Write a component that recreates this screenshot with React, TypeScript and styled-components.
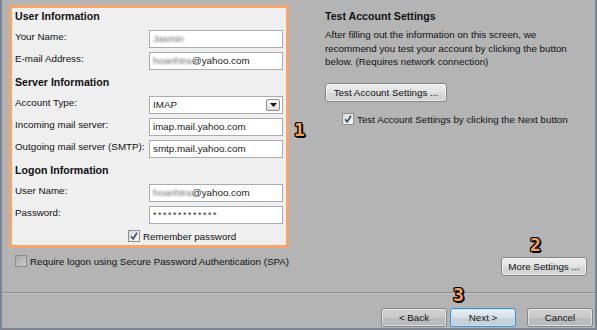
import React from "react";
import styled, { createGlobalStyle } from "styled-components";

const GlobalStyle = createGlobalStyle`
  html, body { margin: 0; padding: 0; background: #b4b4b4; }
  body { font-family: "Liberation Sans", Arial, sans-serif; }
  * { box-sizing: border-box; }
`;

const Window = styled.div`
  position: relative;
  width: 597px;
  height: 330px;
  background: #b4b4b4;
  border-left: 2px solid #7b8496;
  border-right: 2px solid #7b8496;
  border-bottom: 2px solid #7f8590;
  display: flex;
  flex-direction: column;
  font-size: 9.8px;
  color: #111;
`;

const Main = styled.div`
  display: flex;
  height: 292px;
  flex: none;
`;

const LeftCol = styled.div`
  display: flex;
  flex-direction: column;
  padding: 5px 0 0 7px;
  width: 287px;
  flex: none;
`;

const OrangeBox = styled.div`
  width: 280px;
  height: 243px;
  border: 3px solid #f6a56c;
  background: #efefef;
  padding: 0 3px;
  display: flex;
  flex-direction: column;
`;

const SectionTitle = styled.div<{ $mt?: number }>`
  height: 21px;
  line-height: 16px;
  margin-top: ${(p) => p.$mt ?? 0}px;
  font-weight: bold;
  font-size: 10.6px;
  color: #111;
`;

const FieldRow = styled.div`
  display: grid;
  grid-template-columns: 134px 134px;
  height: 22px;
`;

const Label = styled.div`
  line-height: 16px;
  white-space: nowrap;
`;

const TextBox = styled.div`
  margin-top: 1px;
  height: 18px;
  border: 1px solid #a9abb0;
  background: #fff;
  padding: 0 3px;
  line-height: 16px;
  color: #1a1a1a;
  white-space: nowrap;
  overflow: hidden;
  position: relative;
`;

const Blurred = styled.span`
  filter: blur(0.8px);
  color: #6a6a6a;
`;

const Stars = styled.span`
  letter-spacing: 1.5px;
  font-size: 9px;
  color: #333;
`;

const DropButton = styled.span`
  position: absolute;
  right: 2px;
  top: 2px;
  width: 14px;
  height: 12px;
  border: 1px solid #8a8a8a;
  border-radius: 2px;
  background: linear-gradient(#fdfdfd, #dedede);
  display: flex;
  align-items: center;
  justify-content: center;
`;

const CheckRow = styled.div<{ $ml?: number; $mt?: number }>`
  display: flex;
  align-items: center;
  gap: 3px;
  margin-left: ${(p) => p.$ml ?? 0}px;
  margin-top: ${(p) => p.$mt ?? 0}px;
  height: 18px;
  white-space: nowrap;
`;

const Box = styled.span<{ $dim?: boolean }>`
  width: 12px;
  height: 12px;
  flex: none;
  border: 1px solid ${(p) => (p.$dim ? "#8c8c8c" : "#8e8f8f")};
  background: ${(p) =>
    p.$dim
      ? "linear-gradient(135deg, #a9a9a9, #c9c9c9)"
      : "linear-gradient(135deg, #d9d9d9, #fbfbfb)"};
  display: flex;
  align-items: center;
  justify-content: center;
`;

const RightCol = styled.div`
  flex: 1;
  display: flex;
  flex-direction: column;
  align-items: flex-start;
  padding: 9px 8px 16px 36px;
`;

const Heading = styled.div`
  font-weight: bold;
  font-size: 10.6px;
  line-height: 14px;
  color: #111;
`;

const Paragraph = styled.p`
  margin: 5px 0 0 0;
  line-height: 13.5px;
  height: 41px;
  white-space: nowrap;
`;

const Button = styled.button<{ $w: number; $primary?: boolean; $dark?: boolean }>`
  width: ${(p) => p.$w}px;
  height: 19px;
  padding: 0;
  font-family: "Liberation Sans", Arial, sans-serif;
  font-size: 9.8px;
  color: #111;
  border: 1px solid ${(p) => (p.$primary ? "#3a93d6" : "#858585")};
  border-radius: 3px;
  box-shadow: inset 0 0 0 1px ${(p) => (p.$primary ? "#c6e4f6" : "rgba(255,255,255,0.55)")};
  background: ${(p) =>
    p.$primary
      ? "linear-gradient(#e6eef4, #d7e0e7 50%, #c9d3db 51%, #c4cfd8)"
      : p.$dark
      ? "linear-gradient(#d2d2d2, #c8c8c8 50%, #bdbdbd 51%, #b9b9b9)"
      : "linear-gradient(#ececec, #e2e2e2 50%, #d6d6d6 51%, #d2d2d2)"};
  flex: none;
`;

const TestButton = styled(Button)`
  margin-top: 14px;
`;

const Spacer = styled.div`
  flex: 1;
`;

const MoreButton = styled(Button)`
  align-self: flex-end;
`;

const Separator = styled.div`
  height: 2px;
  flex: none;
  border-top: 1px solid #8d8d8d;
  border-bottom: 1px solid #c6c6c6;
`;

const Footer = styled.div`
  flex: 1;
  display: flex;
  justify-content: flex-end;
  align-items: flex-start;
  padding: 14px 0 0 0;
`;

const FooterGap = styled.div<{ $w: number }>`
  width: ${(p) => p.$w}px;
  flex: none;
`;

const Annotation = styled.span<{ $x: number; $y: number }>`
  position: absolute;
  left: ${(p) => p.$x}px;
  top: ${(p) => p.$y}px;
  font-family: "DejaVu Sans Mono", "Liberation Mono", monospace;
  font-weight: bold;
  font-size: 18px;
  line-height: 18px;
  color: #f7a05a;
  text-shadow: 1px 0 0 #000, -1px 0 0 #000, 0 1px 0 #000, 0 -1px 0 #000,
    1px 1px 0 #000, -1px -1px 0 #000, 1px -1px 0 #000, -1px 1px 0 #000,
    2px 1px 0 #000, 1px 2px 0 #000;
`;

const Check = () => (
  <svg width="10" height="10" viewBox="0 0 10 10">
    <path d="M2 5.2 L4.2 7.8 L8 1.8" fill="none" stroke="#3a4b73" strokeWidth="1.6" />
  </svg>
);

const Arrow = () => (
  <svg width="7" height="4" viewBox="0 0 7 4">
    <path d="M0 0 H7 L3.5 4 Z" fill="#111" />
  </svg>
);

export default function App() {
  return (
    <Window>
      <GlobalStyle />
      <Main>
        <LeftCol>
          <OrangeBox>
            <SectionTitle>User Information</SectionTitle>
            <FieldRow>
              <Label>Your Name:</Label>
              <TextBox>
                <Blurred>Jasmin</Blurred>
              </TextBox>
            </FieldRow>
            <FieldRow>
              <Label>E-mail Address:</Label>
              <TextBox>
                <Blurred>hoanhtra</Blurred>@yahoo.com
              </TextBox>
            </FieldRow>
            <SectionTitle $mt={1}>Server Information</SectionTitle>
            <FieldRow>
              <Label>Account Type:</Label>
              <TextBox>
                IMAP
                <DropButton>
                  <Arrow />
                </DropButton>
              </TextBox>
            </FieldRow>
            <FieldRow>
              <Label>Incoming mail server:</Label>
              <TextBox>imap.mail.yahoo.com</TextBox>
            </FieldRow>
            <FieldRow>
              <Label>Outgoing mail server (SMTP):</Label>
              <TextBox>smtp.mail.yahoo.com</TextBox>
            </FieldRow>
            <SectionTitle $mt={1}>Logon Information</SectionTitle>
            <FieldRow>
              <Label>User Name:</Label>
              <TextBox>
                <Blurred>hoanhtra</Blurred>@yahoo.com
              </TextBox>
            </FieldRow>
            <FieldRow>
              <Label>Password:</Label>
              <TextBox>
                <Stars>*************</Stars>
              </TextBox>
            </FieldRow>
            <CheckRow $ml={113}>
              <Box>
                <Check />
              </Box>
              Remember password
            </CheckRow>
          </OrangeBox>
          <CheckRow $ml={6} $mt={4}>
            <Box $dim />
            Require logon using Secure Password Authentication (SPA)
          </CheckRow>
        </LeftCol>
        <RightCol>
          <Heading>Test Account Settings</Heading>
          <Paragraph>
            After filling out the information on this screen, we
            <br />
            recommend you test your account by clicking the button
            <br />
            below. (Requires network connection)
          </Paragraph>
          <TestButton $w={122}>Test Account Settings ...</TestButton>
          <CheckRow $ml={17} $mt={8}>
            <Box>
              <Check />
            </Box>
            Test Account Settings by clicking the Next button
          </CheckRow>
          <Spacer />
          <MoreButton $w={86}>More Settings ...</MoreButton>
        </RightCol>
      </Main>
      <Separator />
      <Footer>
        <Button $w={66} $dark>
          &lt; Back
        </Button>
        <FooterGap $w={3} />
        <Button $w={66} $primary>
          Next &gt;
        </Button>
        <FooterGap $w={11} />
        <Button $w={66} $dark>
          Cancel
        </Button>
        <FooterGap $w={2} />
      </Footer>
      <Annotation $x={292} $y={121}>1</Annotation>
      <Annotation $x={528} $y={236}>2</Annotation>
      <Annotation $x={451} $y={286}>3</Annotation>
    </Window>
  );
}
